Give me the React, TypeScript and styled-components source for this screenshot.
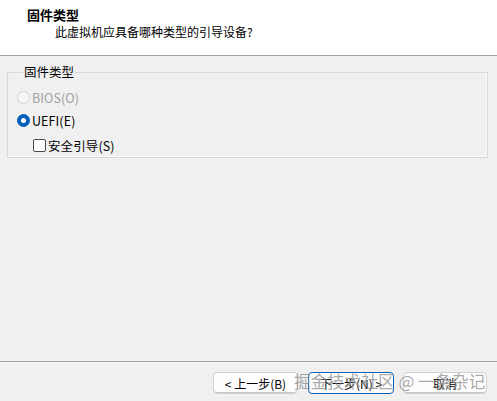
import React from "react";
import styled, { createGlobalStyle } from "styled-components";

const Global = createGlobalStyle`
  html, body { margin: 0; padding: 0; background: #f0f0f0; overflow: hidden; }
  body { font-family: "Noto Sans CJK SC", "Noto Sans", sans-serif; font-size: 12px; color: #000; }
  * { box-sizing: border-box; }
`;

const Window = styled.div`
  position: relative;
  width: 497px;
  height: 401px;
  display: flex;
  flex-direction: column;
  background: #f0f0f0;
  border-bottom-left-radius: 6px;
  border-bottom-right-radius: 6px;
  overflow: hidden;
`;

const Header = styled.div`
  height: 56px;
  background: #ffffff;
  border-bottom: 1px solid #a0a0a0;
  padding: 6px 0 0 27px;
  display: flex;
  flex-direction: column;
  flex-shrink: 0;
`;

const Title = styled.div`
  font-weight: bold;
  font-size: 13px;
  line-height: 17px;
`;

const Subtitle = styled.div`
  padding-left: 28px;
  font-size: 12px;
  line-height: 16px;
  margin-top: 1px;
`;

const Body = styled.div`
  flex: 1;
  padding: 9px 9px 0 7px;
`;

const Group = styled.fieldset`
  margin: 0;
  height: 93px;
  border: 1px solid #d9d9d9;
  box-shadow: inset -1px -1px 0 #fafafa;
  padding: 7px 0 0 9px;
  display: flex;
  flex-direction: column;
`;

const Legend = styled.legend`
  padding: 0 1px;
  margin-left: 6px;
  font-size: 12.5px;
  line-height: 14px;
`;

const OptionRow = styled.label<{ $disabled?: boolean; $indent?: number; $gapTop?: number }>`
  display: flex;
  align-items: center;
  height: 23px;
  margin-top: ${(p) => p.$gapTop ?? 0}px;
  padding-left: ${(p) => p.$indent ?? 0}px;
  color: ${(p) => (p.$disabled ? "#a0a0a0" : "#000")};
  font-size: 12.5px;
  letter-spacing: 0.1px;
`;

const Radio = styled.span<{ $checked?: boolean; $disabled?: boolean }>`
  width: 13px;
  height: 13px;
  border-radius: 50%;
  margin-right: 2px;
  flex-shrink: 0;
  background: ${(p) => (p.$checked ? "#005fb8" : "#f6f6f6")};
  border: 1px solid ${(p) => (p.$checked ? "#005fb8" : p.$disabled ? "#d2d2d2" : "#8a8a8a")};
  display: flex;
  align-items: center;
  justify-content: center;
  &::after {
    content: "";
    display: ${(p) => (p.$checked ? "block" : "none")};
    width: 5px;
    height: 5px;
    border-radius: 50%;
    background: #fff;
  }
`;

const Check = styled.span`
  width: 13px;
  height: 13px;
  border-radius: 2px;
  border: 1px solid #4a4a4a;
  background: #fdfdfd;
  margin-right: 2px;
  flex-shrink: 0;
`;

const Footer = styled.div`
  height: 40px;
  flex-shrink: 0;
  border-top: 1px solid #a0a0a0;
  box-shadow: inset 0 1px 0 #fafafa;
  display: flex;
  justify-content: flex-end;
  align-items: flex-start;
  gap: 9px;
  padding: 10px 10px 0 0;
`;

const Button = styled.button<{ $primary?: boolean; $w: number; $mr?: number }>`
  width: ${(p) => p.$w}px;
  margin-right: ${(p) => p.$mr ?? 0}px;
  height: 22px;
  border-radius: 4px;
  background: #fdfdfd;
  border: 1px solid ${(p) => (p.$primary ? "#005fb8" : "#d0d0d0")};
  box-shadow: ${(p) => (p.$primary ? "inset 0 0 0 1px #ffffff" : "inset 0 -1px 0 #c8c8c8")};
  font-family: "Noto Sans CJK SC", "Noto Sans", sans-serif;
  font-size: 12px;
  color: #000;
  padding: 0;
  display: flex;
  align-items: center;
  justify-content: center;
`;

const Watermark = styled.div`
  position: absolute;
  left: 294px;
  top: 370px;
  font-family: "Noto Sans CJK SC", sans-serif;
  font-size: 16.8px;
  line-height: 23px;
  color: rgba(95, 95, 95, 0.55);
  white-space: nowrap;
  pointer-events: none;
  text-shadow: 0 0 1px rgba(255, 255, 255, 0.6);
`;

export default function App() {
  return (
    <>
      <Global />
      <Window>
        <Header>
          <Title>固件类型</Title>
          <Subtitle>此虚拟机应具备哪种类型的引导设备?</Subtitle>
        </Header>
        <Body>
          <Group>
            <Legend>固件类型</Legend>
            <OptionRow $disabled>
              <Radio $disabled />
              BIOS(O)
            </OptionRow>
            <OptionRow $gapTop={1}>
              <Radio $checked />
              UEFI(E)
            </OptionRow>
            <OptionRow $indent={16} $gapTop={3}>
              <Check />
              安全引导(S)
            </OptionRow>
          </Group>
        </Body>
        <Footer>
          <Button $w={85} $mr={1}>&lt; 上一步(B)</Button>
          <Button $primary $w={86}>下一步(N) &gt;</Button>
          <Button $w={84}>取消</Button>
        </Footer>
        <Watermark>掘金技术社区 @ 一条杂记</Watermark>
      </Window>
    </>
  );
}
